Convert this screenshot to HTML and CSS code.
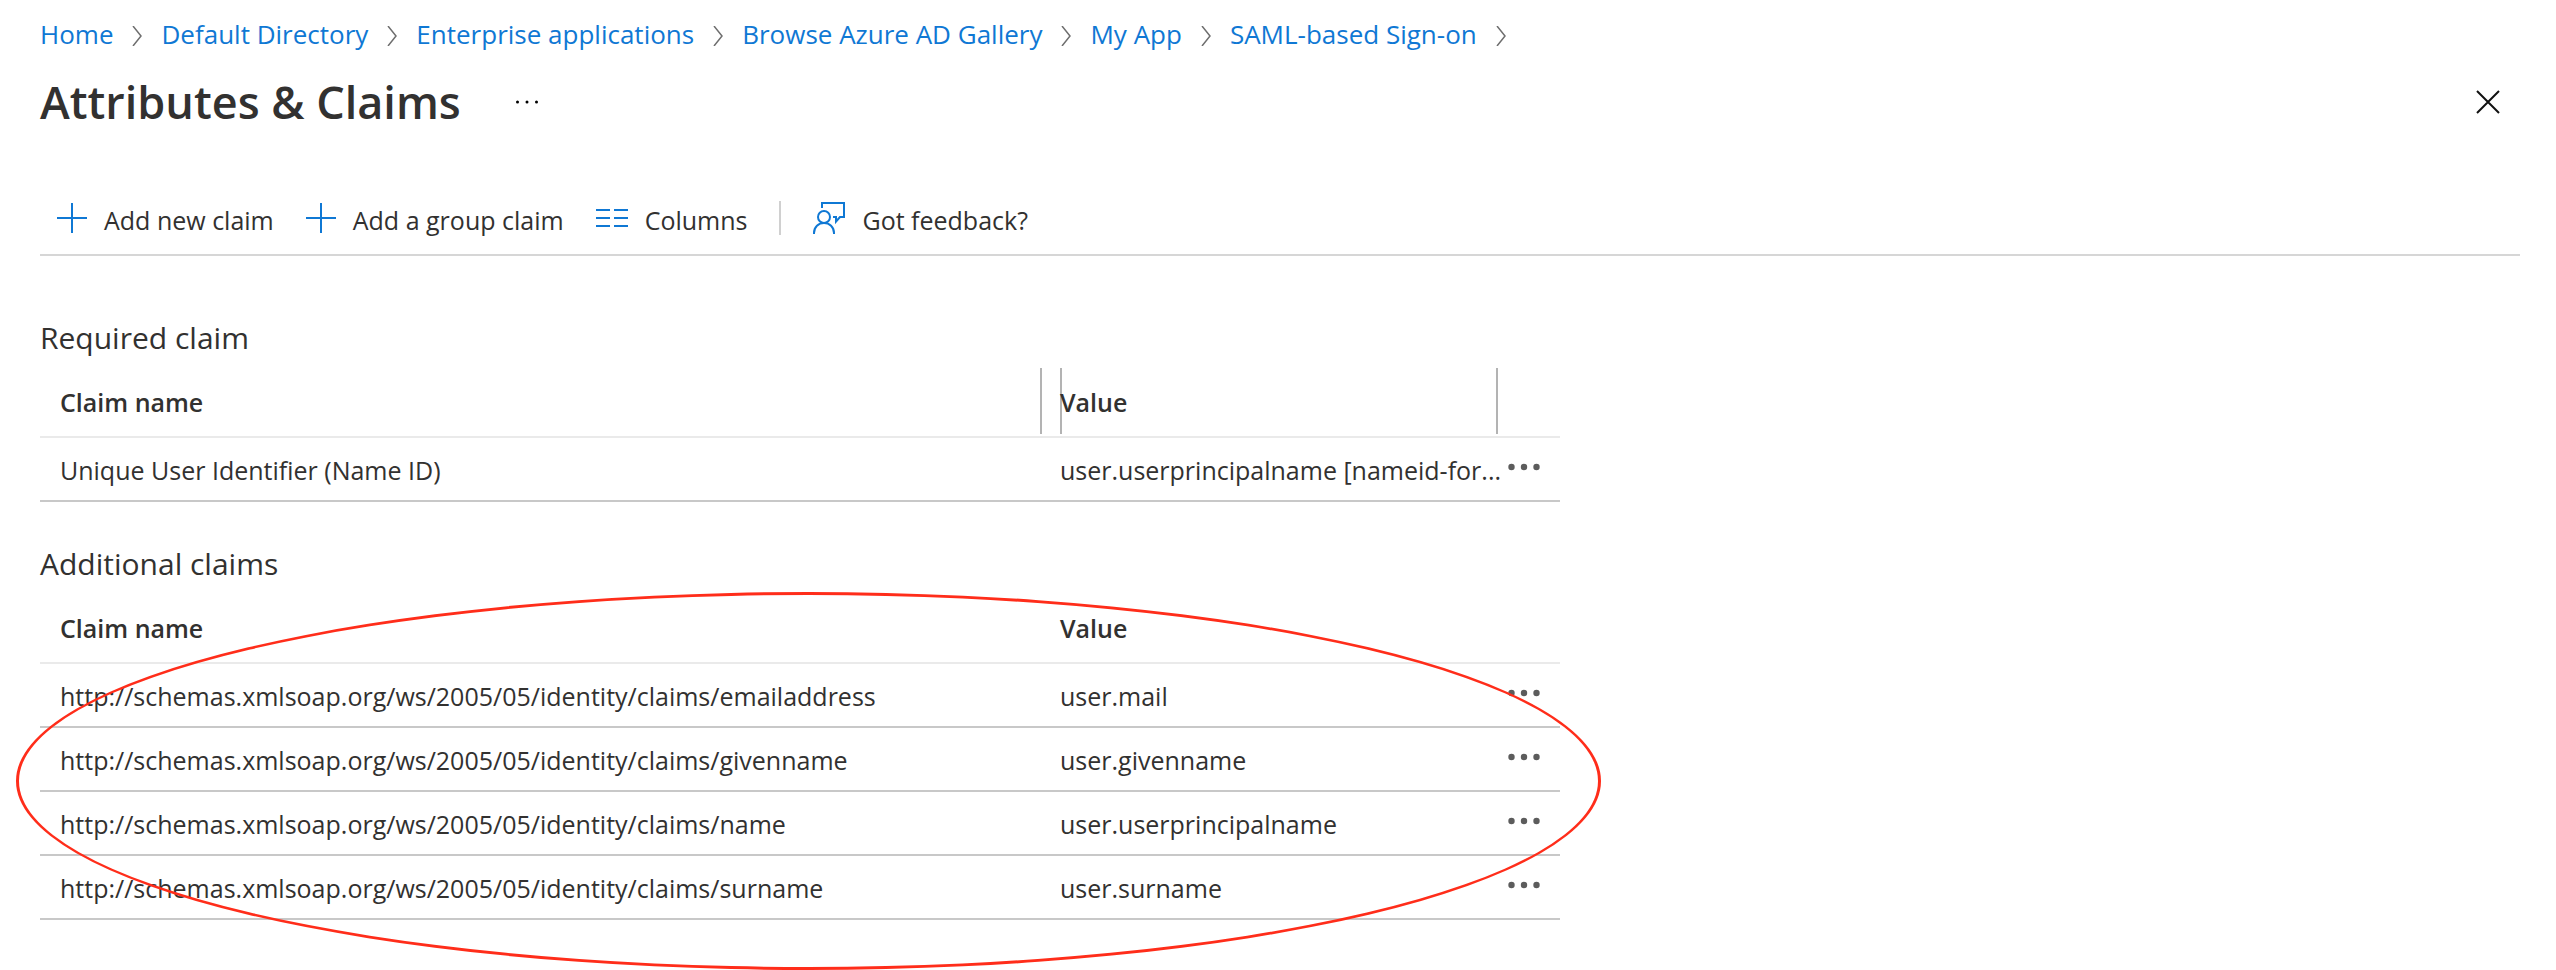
FILE: index.html
```html
<!DOCTYPE html>
<html lang="en">
<head>
<meta charset="utf-8">
<title>Attributes &amp; Claims</title>
<link rel="stylesheet" href="styles.css">
</head>
<body>
<svg class="sprite" aria-hidden="true">
  <symbol id="chevron" viewBox="0 0 10 20"><path d="M1 0 9 10 1 20" fill="none" stroke="#6e6e6e" stroke-width="1.5"/></symbol>
  <symbol id="plus" viewBox="0 0 30 30"><path d="M15 0V30M0 15H30" fill="none" stroke="#0f78d4" stroke-width="2"/></symbol>
  <symbol id="dots" viewBox="0 0 32 8"><g fill="#5c5c5c"><circle cx="3.5" cy="4" r="3.2"/><circle cx="16" cy="4" r="3.2"/><circle cx="28.5" cy="4" r="3.2"/></g></symbol>
</svg>
<div class="page">
  <nav class="breadcrumb" aria-label="Breadcrumb">
    <a href="#">Home</a><svg class="chevron"><use href="#chevron"/></svg>
    <a href="#">Default Directory</a><svg class="chevron"><use href="#chevron"/></svg>
    <a href="#">Enterprise applications</a><svg class="chevron"><use href="#chevron"/></svg>
    <a href="#">Browse Azure AD Gallery</a><svg class="chevron"><use href="#chevron"/></svg>
    <a href="#">My App</a><svg class="chevron"><use href="#chevron"/></svg>
    <a href="#">SAML-based Sign-on</a><svg class="chevron"><use href="#chevron"/></svg>
  </nav>
  <header class="title-bar">
    <h1>Attributes &amp; Claims</h1>
    <button class="title-more" type="button" aria-label="More options">
      <svg viewBox="0 0 24 4" width="24" height="4"><circle cx="2.5" cy="2" r="1.5"/><circle cx="12" cy="2" r="1.5"/><circle cx="21.5" cy="2" r="1.5"/></svg>
    </button>
    <button class="close" type="button" aria-label="Close">
      <svg viewBox="0 0 24 24" width="24" height="24"><path d="M1 1 23 23M23 1 1 23" fill="none" stroke="#111" stroke-width="2"/></svg>
    </button>
  </header>
  <div class="toolbar" role="toolbar">
    <button type="button"><svg class="plus"><use href="#plus"/></svg>Add new claim</button>
    <button type="button"><svg class="plus"><use href="#plus"/></svg>Add a group claim</button>
    <button type="button"><svg class="tool-icon" viewBox="0 0 32 32"><path d="M0 8H14M18 8H32M0 16H14M18 16H32M0 24H14M18 24H32" fill="none" stroke="#0f78d4" stroke-width="2"/></svg>Columns</button>
    <span class="divider"></span>
    <button type="button"><svg class="tool-icon" viewBox="0 0 32 32"><g fill="none" stroke="#0f78d4" stroke-width="2"><path d="M9 6V1H31V15H27L23 19.500V15H20"/><circle cx="11" cy="15" r="6"/><path d="M1 32V31C1 25 5.500 21 11 21S21 25 21 31V32"/></g></svg>Got feedback?</button>
  </div>
  <main class="claims">
    <section class="claim-group">
      <h2>Required claim</h2>
      <table class="resizable">
        <thead><tr><th class="name" scope="col">Claim name</th><th class="value" scope="col">Value</th><td class="actions"></td></tr></thead>
        <tbody>
          <tr><td>Unique User Identifier (Name ID)</td><td>user.userprincipalname [nameid-for...</td><td><button class="more" type="button" aria-label="Row actions"><svg><use href="#dots"/></svg></button></td></tr>
        </tbody>
      </table>
    </section>
    <section class="claim-group">
      <h2>Additional claims</h2>
      <table>
        <thead><tr><th class="name" scope="col">Claim name</th><th class="value" scope="col">Value</th><td class="actions"></td></tr></thead>
        <tbody>
          <tr><td>http://schemas.xmlsoap.org/ws/2005/05/identity/claims/emailaddress</td><td>user.mail</td><td><button class="more" type="button" aria-label="Row actions"><svg><use href="#dots"/></svg></button></td></tr>
          <tr><td>http://schemas.xmlsoap.org/ws/2005/05/identity/claims/givenname</td><td>user.givenname</td><td><button class="more" type="button" aria-label="Row actions"><svg><use href="#dots"/></svg></button></td></tr>
          <tr><td>http://schemas.xmlsoap.org/ws/2005/05/identity/claims/name</td><td>user.userprincipalname</td><td><button class="more" type="button" aria-label="Row actions"><svg><use href="#dots"/></svg></button></td></tr>
          <tr><td>http://schemas.xmlsoap.org/ws/2005/05/identity/claims/surname</td><td>user.surname</td><td><button class="more" type="button" aria-label="Row actions"><svg><use href="#dots"/></svg></button></td></tr>
        </tbody>
      </table>
      <div class="highlight" aria-hidden="true"></div>
    </section>
  </main>
</div>
</body>
</html>
```
FILE: styles.css
```css
* {
  box-sizing: border-box;
}

body {
  margin: 0;
  background: #fff;
  color: #323130;
  font: 25px/36px "Open Sans", "Noto Sans", sans-serif;
}

h1, h2 {
  margin: 0;
}

button {
  padding: 0;
  border: 0;
  background: none;
  color: inherit;
  font: inherit;
  cursor: pointer;
}

svg {
  display: block;
  flex: none;
}

.sprite {
  position: absolute;
  width: 0;
  height: 0;
}

.page {
  padding: 16px 36px 48px 40px;
}

.breadcrumb {
  display: flex;
  align-items: center;
  gap: 19px;
  font-size: 26px;
}

.breadcrumb a {
  color: #0f78d4;
  text-decoration: none;
}

.chevron {
  width: 10px;
  height: 20px;
  margin-top: 4px;
}

.title-bar {
  display: flex;
  align-items: center;
  height: 60px;
  margin-top: 20px;
  padding-right: 20px;
}

h1 {
  font-size: 45px;
  font-weight: 600;
  line-height: 60px;
}

.title-more {
  margin-left: 54px;
}

.close {
  margin-left: auto;
}

.toolbar {
  display: flex;
  align-items: center;
  height: 70px;
  margin-top: 54px;
  padding-left: 17px;
  border-bottom: 2px solid #d6d6d6;
}

.toolbar button {
  display: flex;
  align-items: center;
  gap: 17px;
  margin-right: 32px;
}

.toolbar svg {
  margin-bottom: 4px;
}

.plus {
  width: 30px;
  height: 30px;
}

.tool-icon {
  width: 32px;
  height: 32px;
}

.divider {
  width: 2px;
  height: 34px;
  margin: 0 32px 4px 0;
  background: #d0d0d0;
}

.claims {
  max-width: 1520px;
  padding-top: 60px;
}

.claim-group {
  position: relative;
  margin-bottom: 40px;
}

h2 {
  margin-bottom: 8px;
  font-size: 30px;
  font-weight: 400;
  line-height: 44px;
}

table {
  width: 100%;
  table-layout: fixed;
  border-collapse: separate;
  border-spacing: 0;
}

.value {
  width: 438px;
}

.actions {
  width: 62px;
}

th {
  font-weight: 600;
  text-align: left;
}

th, td {
  padding: 0;
  white-space: nowrap;
}

th:first-child, td:first-child {
  padding-left: 20px;
}

thead th, thead td {
  height: 70px;
  border-bottom: 2px solid #eaeaea;
}

tbody td {
  height: 64px;
  padding-top: 2px;
  border-bottom: 2px solid #c8c8c8;
}

/* Column resize handles, drawn as 2px lines that stop short of the rule. */
.resizable .name {
  background: linear-gradient(#b3b3b3, #b3b3b3) right 18px top 0 / 2px 66px no-repeat;
}

.resizable .value {
  background:
    linear-gradient(#b3b3b3, #b3b3b3) left 0 top 0 / 2px 66px no-repeat,
    linear-gradient(#b3b3b3, #b3b3b3) right 0 top 0 / 2px 66px no-repeat;
}

.more {
  display: block;
  padding: 8px 10px 14px;
}

.more svg {
  width: 32px;
  height: 8px;
}

.highlight {
  position: absolute;
  inset: 50px -41px -50px -24px;
  border: 3px solid #ff2d1a;
  border-radius: 50%;
  pointer-events: none;
}
```
